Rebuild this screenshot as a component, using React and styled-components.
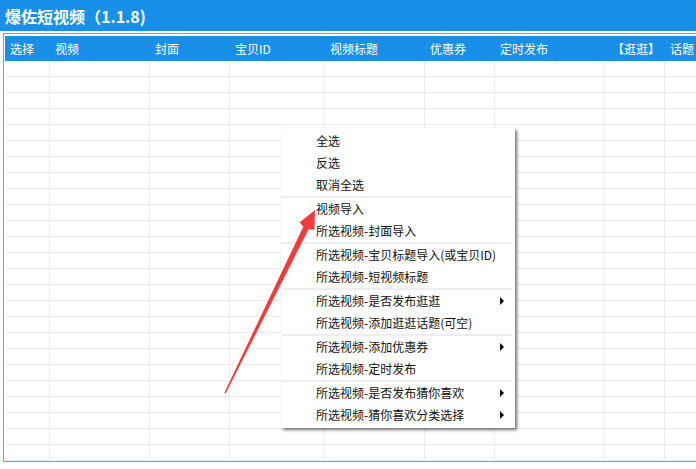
import styled, { createGlobalStyle } from "styled-components";

const GlobalStyle = createGlobalStyle`
  html, body {
    margin: 0;
    padding: 0;
    background: #fff;
    overflow: hidden;
  }
  body {
    font-family: "Noto Sans CJK SC", "Noto Sans", sans-serif;
  }
`;

const columns = [
  { title: "选择", width: 45 },
  { title: "视频", width: 100 },
  { title: "封面", width: 80 },
  { title: "宝贝ID", width: 95 },
  { title: "视频标题", width: 100 },
  { title: "优惠券", width: 70 },
  { title: "定时发布", width: 110 },
  { title: "【逛逛】", width: 60, indent: 7 },
  { title: "话题", width: 100 },
];

const gridTemplate = columns.map((c) => `${c.width}px`).join(" ");

const menuGroups = [
  [{ label: "全选" }, { label: "反选" }, { label: "取消全选" }],
  [{ label: "视频导入" }, { label: "所选视频-封面导入" }],
  [{ label: "所选视频-宝贝标题导入(或宝贝ID)" }, { label: "所选视频-短视频标题" }],
  [{ label: "所选视频-是否发布逛逛", sub: true }, { label: "所选视频-添加逛逛话题(可空)" }],
  [{ label: "所选视频-添加优惠券", sub: true }, { label: "所选视频-定时发布" }],
  [
    { label: "所选视频-是否发布猜你喜欢", sub: true },
    { label: "所选视频-猜你喜欢分类选择", sub: true },
  ],
];

const Page = styled.div`
  position: relative;
  width: 696px;
  height: 469px;
  overflow: hidden;
  background: #fff;
`;

const TitleBar = styled.header`
  height: 31px;
  background: #1890e9;
  color: #fff;
  display: flex;
  align-items: center;
  padding-left: 5px;
  font-size: 16px;
  font-weight: bold;
`;

const Table = styled.div`
  margin: 2px 0 0 3px;
  width: 900px;
  border: 1px solid #4db3f0;
  padding: 2px 0 0 1px;
`;

const HeaderRow = styled.div`
  display: grid;
  grid-template-columns: ${gridTemplate};
  height: 25px;
  background: #1890e9;
`;

const HeaderCell = styled.div`
  color: #fff;
  font-size: 12px;
  line-height: 25px;
  padding-left: ${(p) => p.$indent ?? 5}px;
  white-space: nowrap;
`;

const Row = styled.div`
  display: grid;
  grid-template-columns: ${gridTemplate};
  height: 16px;
`;

const Cell = styled.div`
  border-right: 1px solid #ececec;
  border-bottom: 1px solid #ececec;
`;

const Menu = styled.div`
  position: absolute;
  left: 281px;
  top: 128px;
  width: 234px;
  padding: 2px 0;
  background: #fff;
  box-shadow: 2px 2px 3px rgba(0, 0, 0, 0.55);
`;

const MenuItem = styled.div`
  position: relative;
  height: 22px;
  line-height: 22px;
  padding-left: 35px;
  font-size: 12px;
  color: #111;
  white-space: nowrap;
`;

const SubArrow = styled.span`
  position: absolute;
  right: 11px;
  top: 7px;
  width: 0;
  height: 0;
  border-left: 4px solid #000;
  border-top: 4px solid transparent;
  border-bottom: 4px solid transparent;
`;

const Separator = styled.div`
  height: 2px;
  margin: 0 3px 0 1px;
  background: #eeeeee;
`;

const Pointer = styled.svg`
  position: absolute;
  left: 0;
  top: 0;
  pointer-events: none;
`;

const App = () => {
  const rows = Array.from({ length: 25 });
  return (
    <>
      <GlobalStyle />
      <Page>
        <TitleBar>爆佐短视频（1.1.8)</TitleBar>
        <Table>
          <HeaderRow>
            {columns.map((c) => (
              <HeaderCell key={c.title} $indent={c.indent}>
                {c.title}
              </HeaderCell>
            ))}
          </HeaderRow>
          {rows.map((_, i) => (
            <Row key={i}>
              {columns.map((c) => (
                <Cell key={c.title} />
              ))}
            </Row>
          ))}
        </Table>

        <Menu>
          {menuGroups.map((group, gi) => (
            <div key={gi}>
              {gi > 0 && <Separator />}
              {group.map((item) => (
                <MenuItem key={item.label}>
                  {item.label}
                  {item.sub && <SubArrow />}
                </MenuItem>
              ))}
            </div>
          ))}
        </Menu>

        <Pointer width="696" height="469" viewBox="0 0 696 469">
          <polygon
            fill="#f43b3b"
            points="225.8,393.3 308.6,229.2 314.4,229.8 315,210 299.6,222.4 303.4,226.4 224.4,392.7"
          />
        </Pointer>
      </Page>
    </>
  );
};

export default App;
